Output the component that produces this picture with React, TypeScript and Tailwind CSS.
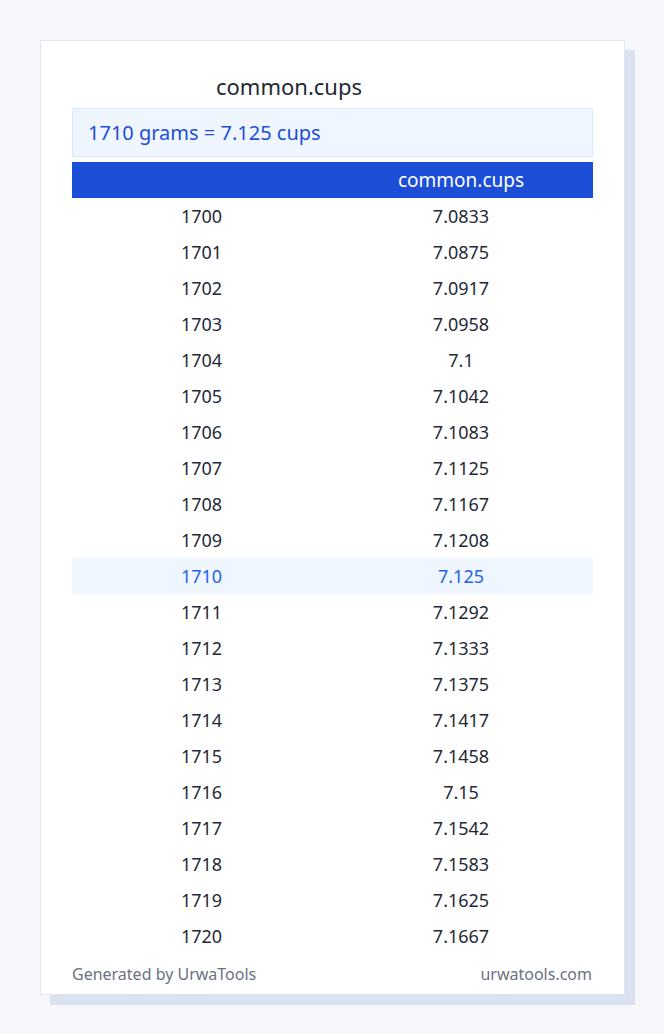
const rows: [number, string][] = [
  [1700, "7.0833"],
  [1701, "7.0875"],
  [1702, "7.0917"],
  [1703, "7.0958"],
  [1704, "7.1"],
  [1705, "7.1042"],
  [1706, "7.1083"],
  [1707, "7.1125"],
  [1708, "7.1167"],
  [1709, "7.1208"],
  [1710, "7.125"],
  [1711, "7.1292"],
  [1712, "7.1333"],
  [1713, "7.1375"],
  [1714, "7.1417"],
  [1715, "7.1458"],
  [1716, "7.15"],
  [1717, "7.1542"],
  [1718, "7.1583"],
  [1719, "7.1625"],
  [1720, "7.1667"],
]

export default function App() {
  return (
    <div
      className="min-h-[1034px] w-[664px] bg-[#f5f7fb] pt-[40px] pl-[40px]"
      style={{ fontFamily: '"Noto Sans", "Open Sans", sans-serif' }}
    >
      <div className="w-[585px] h-[955px] bg-white border border-[#dfe6f5] shadow-[10px_10px_0_0_#dae1ef] px-[31px] pt-[31px] flex flex-col">
        <h1 className="h-[28px] pl-[144px] text-[22px] leading-[28px] text-[#1f2937]">common.cups</h1>
        <div className="mt-[8px] h-[49px] flex items-center pt-[1px] px-[15px] bg-[#eff6ff] border border-[#dbeafe] text-[20px] text-[#1d4ed8]">
          1710 grams = 7.125 cups
        </div>
        <div className="mt-[5px] h-[36px] pt-[1px] grid grid-cols-[259px_260px] items-center bg-[#1d4ed8] text-white text-[19px]">
          <span></span>
          <span className="text-center">common.cups</span>
        </div>
        {rows.map(([g, c]) => (
          <div
            key={g}
            className={
              g === 1710
                ? "h-[36px] pt-[1px] grid grid-cols-[259px_260px] items-center text-[18px] bg-[#eff6ff] text-[#2563eb]"
                : "h-[36px] pt-[1px] grid grid-cols-[259px_260px] items-center text-[18px] text-[#1f2937]"
            }
          >
            <span className="text-center">{g}</span>
            <span className="text-center">{c}</span>
          </div>
        ))}
        <div className="mt-[10px] flex justify-between pr-[1px] text-[16px] leading-[20px] text-[#6b7280]">
          <span>Generated by UrwaTools</span>
          <span>urwatools.com</span>
        </div>
      </div>
    </div>
  )
}
